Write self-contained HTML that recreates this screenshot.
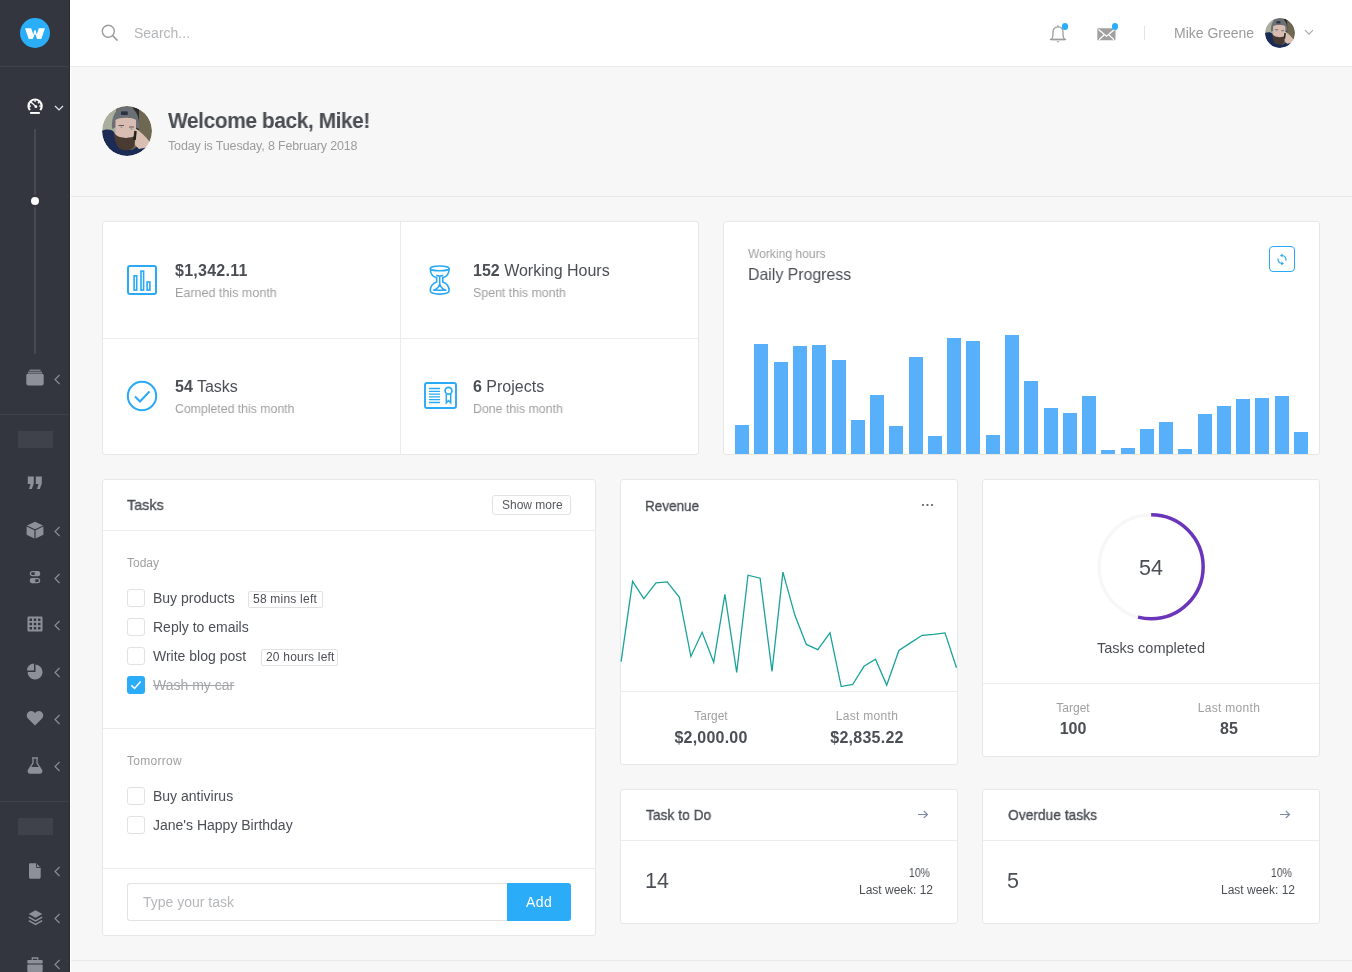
<!DOCTYPE html>
<html><head><meta charset="utf-8">
<style>
*{box-sizing:border-box;margin:0;padding:0}
html,body{width:1352px;height:972px;overflow:hidden;background:#f7f7f7;font-family:"Liberation Sans",sans-serif;color:#4b4e54;-webkit-font-smoothing:antialiased}
.a{position:absolute}
.t{position:absolute;white-space:nowrap;line-height:1;will-change:transform}
#sb{left:0;top:0;width:70px;height:972px;background:#33363f;border-right:1px solid #282b32}
#hd{left:70px;top:0;width:1282px;height:67px;background:#fff;border-bottom:1px solid #ebebeb}
.card{position:absolute;background:#fff;border:1px solid #e6e8e8;border-radius:3px}
.ic{position:absolute}
.chev{position:absolute}
</style></head><body>
<!-- SIDEBAR -->
<div id="sb" class="a">
<div class="a" style="left:0;top:66px;width:69px;height:1px;background:#3e414b"></div>
<div class="a" style="left:0;top:414px;width:69px;height:1px;background:#3e414b"></div>
<div class="a" style="left:0;top:801px;width:69px;height:1px;background:#3e414b"></div>
<!-- logo -->
<div class="a" style="left:20px;top:18px;width:30px;height:30px;border-radius:50%;background:#2aaefa"></div>
<svg class="a" style="left:25px;top:27.5px" width="20" height="11.5" viewBox="0 0 20 11.5"><path d="M0 0.2 H6.2 L8.3 6.4 L9.4 2.2 H10.6 L11.7 6.4 L13.8 0.2 H20 L16.2 11.2 H12.3 L10 5.4 L7.7 11.2 H3.8 Z" fill="#fff"/></svg>
<!-- dashboard icon -->
<svg class="a" style="left:26px;top:97px" width="18" height="18" viewBox="0 0 18 18">
<path d="M3.90 13.16 A6.6 6.6 0 1 1 14.30 13.16" fill="none" stroke="#fff" stroke-width="2.2"/>
<path d="M5.00 9.10 L3.30 9.10 M6.20 6.20 L5.00 5.00 M9.10 5.00 L9.10 3.30 M12.00 6.20 L13.20 5.00 M13.20 9.10 L14.90 9.10 " stroke="#fff" stroke-width="1.3"/>
<path d="M6.2 6 L9.9 9.6" stroke="#fff" stroke-width="1.1"/>
<circle cx="9.9" cy="9.7" r="1.4" fill="#fff"/>
<rect x="4.1" y="15" width="9.7" height="1.9" fill="#fff"/>
</svg>
<svg class="chev" style="left:54px;top:104px" width="10" height="8" viewBox="0 0 10 8"><path d="M1 2 L5 6 L9 2" fill="none" stroke="#e6e7e9" stroke-width="1.2"/></svg>
<!-- timeline -->
<div class="a" style="left:34px;top:129px;width:2px;height:225px;background:#464954"></div>
<div class="a" style="left:29px;top:195px;width:12px;height:12px;border-radius:50%;background:#fff;border:2px solid #33363f"></div>
<!-- stack icon -->
<svg class="a" style="left:26px;top:369px" width="18" height="17" viewBox="0 0 18 17">
<rect x="3.5" y="0.6" width="11" height="1.2" fill="#8d9099"/>
<rect x="2" y="2.6" width="14" height="1.2" fill="#8d9099"/>
<rect x="0.3" y="4.6" width="17.4" height="12" rx="2" fill="#8d9099"/>
</svg>
<svg class="chev" style="left:53px;top:374px" width="8" height="11" viewBox="0 0 8 11"><path d="M6.5 1 L2 5.5 L6.5 10" fill="none" stroke="#8d9099" stroke-width="1.1"/></svg>
<div class="a" style="left:18px;top:431px;width:35px;height:17px;background:#3f424b"></div>
<svg class="a" style="left:27px;top:476px" width="16" height="14" viewBox="0 0 16 14">
<path d="M0.8 0.5 H6.8 V7.5 L4.8 13 H2 L3.6 8 H0.8 Z M8.8 0.5 H14.8 V7.5 L12.8 13 H10 L11.6 8 H8.8 Z" fill="#8d9099"/></svg>
<svg class="a" style="left:26px;top:521px" width="18" height="18" viewBox="0 0 18 18">
<path d="M9 0.7 L17 4.5 L9 8.3 L1 4.5 Z" fill="#8d9099"/>
<path d="M0.6 5.6 L8.4 9.3 V17.5 L0.6 13.8 Z" fill="#8d9099"/>
<path d="M17.4 5.6 L9.6 9.3 V17.5 L17.4 13.8 Z" fill="#8d9099"/>
</svg>
<svg class="chev" style="left:53px;top:526px" width="8" height="11" viewBox="0 0 8 11"><path d="M6.5 1 L2 5.5 L6.5 10" fill="none" stroke="#8d9099" stroke-width="1.1"/></svg>
<svg class="a" style="left:29px;top:570px" width="12" height="15" viewBox="0 0 12 15">
<rect x="1.4" y="1.6" width="9.2" height="4" rx="2" fill="none" stroke="#8d9099" stroke-width="1.3"/>
<circle cx="8.3" cy="3.6" r="2.7" fill="#8d9099"/>
<rect x="1.4" y="8.6" width="9.2" height="4" rx="2" fill="none" stroke="#8d9099" stroke-width="1.3"/>
<circle cx="3.7" cy="10.6" r="2.7" fill="#8d9099"/>
</svg>
<svg class="chev" style="left:53px;top:573px" width="8" height="11" viewBox="0 0 8 11"><path d="M6.5 1 L2 5.5 L6.5 10" fill="none" stroke="#8d9099" stroke-width="1.1"/></svg>
<svg class="a" style="left:27px;top:616px" width="16" height="16" viewBox="0 0 16 16">
<path d="M1.5 0.5 H14.5 A1 1 0 0 1 15.5 1.5 V14.5 A1 1 0 0 1 14.5 15.5 H1.5 A1 1 0 0 1 0.5 14.5 V1.5 A1 1 0 0 1 1.5 0.5 Z M2.5 2.5 V5 H5 V2.5 Z M6.75 2.5 V5 H9.25 V2.5 Z M11 2.5 V5 H13.5 V2.5 Z M2.5 6.75 V9.25 H5 V6.75 Z M6.75 6.75 V9.25 H9.25 V6.75 Z M11 6.75 V9.25 H13.5 V6.75 Z M2.5 11 V13.5 H5 V11 Z M6.75 11 V13.5 H9.25 V11 Z M11 11 V13.5 H13.5 V11 Z" fill="#8d9099" fill-rule="evenodd"/>
</svg>
<svg class="chev" style="left:53px;top:620px" width="8" height="11" viewBox="0 0 8 11"><path d="M6.5 1 L2 5.5 L6.5 10" fill="none" stroke="#8d9099" stroke-width="1.1"/></svg>
<svg class="a" style="left:26px;top:662px" width="18" height="18" viewBox="0 0 18 18">
<path d="M8 1.5 V8.5 H1 A7 7 0 0 1 8 1.5 Z" fill="#8d9099"/>
<path d="M9.5 2.5 A7.5 7.5 0 1 1 1.6 10 H9.5 Z" fill="#8d9099"/>
</svg>
<svg class="chev" style="left:53px;top:667px" width="8" height="11" viewBox="0 0 8 11"><path d="M6.5 1 L2 5.5 L6.5 10" fill="none" stroke="#8d9099" stroke-width="1.1"/></svg>
<svg class="a" style="left:26px;top:710px" width="18" height="16" viewBox="0 0 18 16">
<path d="M9 15.5 L2.2 8.8 C0.2 6.8 0.4 3.5 2.4 1.9 C4.4 0.3 7.3 0.8 9 3 C10.7 0.8 13.6 0.3 15.6 1.9 C17.6 3.5 17.8 6.8 15.8 8.8 Z" fill="#8d9099"/>
</svg>
<svg class="chev" style="left:53px;top:714px" width="8" height="11" viewBox="0 0 8 11"><path d="M6.5 1 L2 5.5 L6.5 10" fill="none" stroke="#8d9099" stroke-width="1.1"/></svg>
<svg class="a" style="left:27px;top:757px" width="16" height="17" viewBox="0 0 16 17">
<rect x="5" y="0.3" width="6" height="1.4" fill="#8d9099"/>
<path d="M6 1.5 V6 L1.5 13 C0.8 14.5 1.6 16 3.2 16 H12.8 C14.4 16 15.2 14.5 14.5 13 L10 6 V1.5" fill="none" stroke="#8d9099" stroke-width="1.3"/>
<path d="M3.6 10 H12.4 L14.5 13 C15.2 14.5 14.4 16 12.8 16 H3.2 C1.6 16 0.8 14.5 1.5 13 Z" fill="#8d9099"/>
</svg>
<svg class="chev" style="left:53px;top:761px" width="8" height="11" viewBox="0 0 8 11"><path d="M6.5 1 L2 5.5 L6.5 10" fill="none" stroke="#8d9099" stroke-width="1.1"/></svg>
<div class="a" style="left:18px;top:818px;width:35px;height:17px;background:#3f424b"></div>
<svg class="a" style="left:29px;top:862.5px" width="12" height="16" viewBox="0 0 12 16">
<path d="M1.4 0.3 H7.3 L11.7 4.7 V14.3 A1.4 1.4 0 0 1 10.3 15.7 H1.4 A1.4 1.4 0 0 1 0 14.3 V1.7 A1.4 1.4 0 0 1 1.4 0.3 Z" fill="#8d9099"/>
<path d="M7.5 0.3 V4.5 H11.7" fill="none" stroke="#33363f" stroke-width="0.9"/>
</svg>
<svg class="chev" style="left:53px;top:866px" width="8" height="11" viewBox="0 0 8 11"><path d="M6.5 1 L2 5.5 L6.5 10" fill="none" stroke="#8d9099" stroke-width="1.1"/></svg>
<svg class="a" style="left:27.5px;top:909.5px" width="15" height="16" viewBox="0 0 15 16">
<path d="M7.5 0.3 L14.3 4 L7.5 7.7 L0.7 4 Z" fill="#8d9099"/>
<path d="M0.8 7.2 L7.5 10.9 L14.2 7.2" fill="none" stroke="#8d9099" stroke-width="1.5"/>
<path d="M0.8 10.6 L7.5 14.3 L14.2 10.6" fill="none" stroke="#8d9099" stroke-width="1.5"/>
</svg>
<svg class="chev" style="left:53px;top:913px" width="8" height="11" viewBox="0 0 8 11"><path d="M6.5 1 L2 5.5 L6.5 10" fill="none" stroke="#8d9099" stroke-width="1.1"/></svg>
<svg class="a" style="left:27px;top:957px" width="16" height="15" viewBox="0 0 16 15">
<path d="M5.3 2.8 V1 H10.7 V2.8" fill="none" stroke="#8d9099" stroke-width="1.4"/>
<rect x="0.3" y="3" width="15.4" height="3.6" rx="1" fill="#8d9099"/>
<rect x="0.3" y="7.4" width="15.4" height="7.6" rx="1" fill="#8d9099"/>
</svg>
<svg class="chev" style="left:53px;top:959px" width="8" height="11" viewBox="0 0 8 11"><path d="M6.5 1 L2 5.5 L6.5 10" fill="none" stroke="#8d9099" stroke-width="1.1"/></svg>
</div>
<!-- HEADER -->
<div id="hd" class="a">
<svg class="a" style="left:31px;top:24px" width="18" height="18" viewBox="0 0 18 18"><circle cx="7.3" cy="7.3" r="6" fill="none" stroke="#9d9d9d" stroke-width="1.4"/><path d="M11.6 11.6 L16.6 16.6" stroke="#9d9d9d" stroke-width="1.5"/></svg>
<div class="t" style="left:64px;top:26px;font-size:14px;color:#b4b5b8">Search...</div>
<svg class="a" style="left:979px;top:24px" width="18" height="20" viewBox="0 0 18 20">
<path d="M2.5 15.5 C3.6 14 4 12.5 4 10.5 V8 C4 5 6 2.8 9 2.8 C12 2.8 14 5 14 8 V10.5 C14 12.5 14.4 14 15.5 15.5 Z" fill="none" stroke="#9d9d9d" stroke-width="1.3" stroke-linejoin="round"/>
<path d="M0.8 15.5 H17.2" stroke="#9d9d9d" stroke-width="1.3"/>
<path d="M9 1.2 V2.8" stroke="#9d9d9d" stroke-width="1.4"/>
<path d="M7.3 17.3 H10.7 L9 18.6 Z" fill="#9d9d9d"/>
</svg>
<div class="a" style="left:991.8px;top:23.2px;width:6.4px;height:6.4px;border-radius:50%;background:#2aaefa"></div>
<svg class="a" style="left:1026.5px;top:27.5px" width="20" height="14" viewBox="0 0 20 14">
<rect x="0.3" y="0.3" width="18.2" height="12" rx="1" fill="#a0a0a0"/>
<path d="M1.5 1.5 L9.5 8.2 L17.5 1.5 M2 11.8 L7 7 M17 11.8 L12 7" fill="none" stroke="#fff" stroke-width="1.2"/>
</svg>
<div class="a" style="left:1041.8px;top:23.2px;width:6.4px;height:6.4px;border-radius:50%;background:#2aaefa"></div>
<div class="a" style="left:1074px;top:26px;width:1px;height:14px;background:#e3e3e3"></div>
<div class="t" style="left:1104px;top:26px;font-size:14px;color:#9b9b9d">Mike Greene</div>
<div id="av2" class="a" style="left:1195px;top:18px;width:30px;height:30px;border-radius:50%;overflow:hidden"><svg width="100%" height="100%" viewBox="0 0 50 50" style="display:block"><defs><clipPath id="cc2"><circle cx="25" cy="25" r="25"/></clipPath><filter id="bl2" x="-10%" y="-10%" width="120%" height="120%"><feGaussianBlur stdDeviation="0.9"/></filter></defs>
<g clip-path="url(#cc2)"><g filter="url(#bl2)">
<rect width="50" height="50" fill="#6e6752"/>
<path d="M0 0 H14 V30 H0 Z" fill="#a9ae9d"/>
<path d="M31 0 H37 V24 H33 Z" fill="#2e2c2a"/>
<path d="M10 23 C9 9 15 0.5 24 0.5 C33 0.5 38 9 37 23 L33 21 L14 21 Z" fill="#6a6f74"/>
<rect x="19" y="5.4" width="6.7" height="3.6" fill="#2a3142"/>
<path d="M13.5 14 C17 11 31 11 34 14 L34 31 C34 38 30 42 24 42 C18 42 13.5 38 13.5 31 Z" fill="#d9bdb2"/>
<path d="M16.5 19.5 H22 M27 21 H32" stroke="#6a5750" stroke-width="1.2"/>
<circle cx="19.5" cy="21.3" r="1" fill="#7fa3ad"/><circle cx="29.5" cy="23" r="1" fill="#7fa3ad"/>
<path d="M0 25 C4 23 9 23 12 26 L18 42 L30 44 L36 40 L44 42 L50 36 V50 H0 Z" fill="#1b2c56"/>
<path d="M11.5 26 C12.5 33 14 39 17 42 C20 45 28 45 31 42 C33 39 33.5 34 33.5 29 C31 32 28 31 24 32 C20 31 15 32 11.5 26 Z" fill="#4a3b30"/>
<path d="M32.5 22 C37 24 44 31 47 35 C48 38 46 41 42 42 L37 43 L33 39 Z" fill="#d8bfb1"/>
<path d="M33.5 25 L32.5 34" stroke="#232222" stroke-width="2.5"/>
</g></g></svg></div>
<svg class="a" style="left:1234px;top:29px" width="10" height="7" viewBox="0 0 10 7"><path d="M1 1.2 L5 5.2 L9 1.2" fill="none" stroke="#a3a6ab" stroke-width="1.1"/></svg>
</div>
<div class="a" style="left:70px;top:67px;width:1px;height:905px;background:#fff"></div>

<!-- WELCOME -->
<div class="a" style="left:102px;top:106px;width:50px;height:50px;border-radius:50%;overflow:hidden"><svg width="100%" height="100%" viewBox="0 0 50 50" style="display:block"><defs><clipPath id="cc"><circle cx="25" cy="25" r="25"/></clipPath><filter id="bl" x="-10%" y="-10%" width="120%" height="120%"><feGaussianBlur stdDeviation="0.7"/></filter></defs>
<g clip-path="url(#cc)"><g filter="url(#bl)">
<rect width="50" height="50" fill="#6e6752"/>
<path d="M0 0 H14 V30 H0 Z" fill="#a9ae9d"/>
<path d="M31 0 H37 V24 H33 Z" fill="#2e2c2a"/>
<path d="M10 23 C9 9 15 0.5 24 0.5 C33 0.5 38 9 37 23 L33 21 L14 21 Z" fill="#6a6f74"/>
<rect x="19" y="5.4" width="6.7" height="3.6" fill="#2a3142"/>
<path d="M13.5 14 C17 11 31 11 34 14 L34 31 C34 38 30 42 24 42 C18 42 13.5 38 13.5 31 Z" fill="#d9bdb2"/>
<path d="M16.5 19.5 H22 M27 21 H32" stroke="#6a5750" stroke-width="1.2"/>
<circle cx="19.5" cy="21.3" r="1" fill="#7fa3ad"/><circle cx="29.5" cy="23" r="1" fill="#7fa3ad"/>
<path d="M0 25 C4 23 9 23 12 26 L18 42 L30 44 L36 40 L44 42 L50 36 V50 H0 Z" fill="#1b2c56"/>
<path d="M11.5 26 C12.5 33 14 39 17 42 C20 45 28 45 31 42 C33 39 33.5 34 33.5 29 C31 32 28 31 24 32 C20 31 15 32 11.5 26 Z" fill="#4a3b30"/>
<path d="M32.5 22 C37 24 44 31 47 35 C48 38 46 41 42 42 L37 43 L33 39 Z" fill="#d8bfb1"/>
<path d="M33.5 25 L32.5 34" stroke="#232222" stroke-width="2.5"/>
</g></g></svg></div>
<div class="t" style="left:168px;top:109.5px;font-size:22px;font-weight:bold;color:#4a4d53;letter-spacing:-0.5px;transform:scaleX(0.955);transform-origin:0 0">Welcome back, Mike!</div>
<div class="t" style="left:168px;top:140px;font-size:12.5px;color:#9c9c9e;letter-spacing:-0.15px">Today is Tuesday, 8 February 2018</div>
<div class="a" style="left:71px;top:196px;width:1281px;height:1px;background:#e9e9e9"></div>

<!-- ROW1 -->
<div class="card" style="left:102px;top:221px;width:597px;height:234px">
<div class="a" style="left:297px;top:0;width:1px;height:232px;background:#ececec"></div>
<div class="a" style="left:0;top:116px;width:595px;height:1px;background:#ececec"></div>
</div>
<svg class="a" style="left:126px;top:264px" width="32" height="32" viewBox="0 0 32 32">
<rect x="2" y="2" width="28" height="28" rx="2" fill="none" stroke="#2aa9f4" stroke-width="2"/>
<rect x="8.1" y="11.8" width="2.6" height="14.3" fill="none" stroke="#2aa9f4" stroke-width="1.6"/>
<rect x="15" y="7.1" width="2.6" height="19" fill="none" stroke="#2aa9f4" stroke-width="1.6"/>
<rect x="21.1" y="18" width="2.8" height="8.1" fill="none" stroke="#2aa9f4" stroke-width="1.6"/>
</svg>
<svg class="a" style="left:428px;top:264px" width="24" height="32" viewBox="0 0 24 32">
<ellipse cx="11.7" cy="4.4" rx="9.4" ry="2.4" fill="none" stroke="#2aa9f4" stroke-width="1.6"/>
<path d="M2.3 4.4 C2.3 9.8 5 12.8 8.6 13.6 V17.9 C4.5 19.5 2.3 22.5 2.3 26.5 C2.3 29.2 6.5 30.1 11.7 30.1 C16.9 30.1 21.1 29.2 21.1 26.5 C21.1 22.5 18.9 19.5 14.8 17.9 V13.6 C18.4 12.8 21.1 9.8 21.1 4.4" fill="none" stroke="#2aa9f4" stroke-width="1.6"/>
<path d="M8.3 11.3 Q11.7 12.9 15.1 11.3 M11.7 12.2 V20.5" fill="none" stroke="#2aa9f4" stroke-width="1.5"/>
<path d="M11.7 20 C11 23.3 8.3 25.3 5.6 26.3 H17.8 C15.1 25.3 12.4 23.3 11.7 20 Z" fill="none" stroke="#2aa9f4" stroke-width="1.5" stroke-linejoin="round"/>
</svg>
<svg class="a" style="left:126px;top:380px" width="32" height="32" viewBox="0 0 32 32">
<circle cx="16" cy="16" r="14.2" fill="none" stroke="#2aa9f4" stroke-width="2"/>
<path d="M9 16.5 L14 21.5 L23.5 11.5" fill="none" stroke="#2aa9f4" stroke-width="2"/>
</svg>
<svg class="a" style="left:423px;top:381px" width="35" height="29" viewBox="0 0 35 29">
<rect x="2" y="2" width="31" height="25" rx="2" fill="none" stroke="#2aa9f4" stroke-width="1.9"/>
<path d="M6 7.5 H17 M6 10.3 H17 M6 13.1 H17 M6 15.9 H17 M6 18.7 H17 M6 21.5 H17" stroke="#2aa9f4" stroke-width="1.3"/>
<circle cx="25.5" cy="9.8" r="3.4" fill="none" stroke="#2aa9f4" stroke-width="1.7"/>
<path d="M23.3 13 V21.8 L25.5 19.6 L27.7 21.8 V13" fill="none" stroke="#2aa9f4" stroke-width="1.5"/>
</svg>
<div class="t" style="left:175px;top:262.9px;font-size:16px;color:#4b4e54;letter-spacing:0.25px;"><b>$1,342.11</b></div>
<div class="t" style="left:175px;top:286.3px;font-size:13px;color:#a0a0a2;transform:scaleX(0.964);transform-origin:0 0;">Earned this month</div>
<div class="t" style="left:473px;top:262.9px;font-size:16px;color:#4b4e54;"><b>152</b> Working Hours</div>
<div class="t" style="left:473px;top:286.3px;font-size:13px;color:#a0a0a2;transform:scaleX(0.952);transform-origin:0 0;">Spent this month</div>
<div class="t" style="left:175px;top:378.9px;font-size:16px;color:#4b4e54;"><b>54</b> Tasks</div>
<div class="t" style="left:175px;top:402.3px;font-size:13px;color:#a0a0a2;transform:scaleX(0.944);transform-origin:0 0;">Completed this month</div>
<div class="t" style="left:473px;top:378.9px;font-size:16px;color:#4b4e54;"><b>6</b> Projects</div>
<div class="t" style="left:473px;top:402.3px;font-size:13px;color:#a0a0a2;transform:scaleX(0.949);transform-origin:0 0;">Done this month</div>
<div class="card" style="left:723px;top:221px;width:597px;height:234px;overflow:hidden">
</div>
<div class="t" style="left:748px;top:247.3px;font-size:13px;color:#a0a0a2;transform:scaleX(0.929);transform-origin:0 0;">Working hours</div>
<div class="t" style="left:748px;top:265.9px;font-size:16.5px;color:#4b4e54;transform:scaleX(0.962);transform-origin:0 0;">Daily Progress</div>
<div class="a" style="left:1269px;top:246px;width:26px;height:26px;border:1px solid #2aa9f4;border-radius:4px"></div>
<svg class="a" style="left:1275px;top:252px" width="14" height="14" viewBox="0 0 14 14">
<path d="M7 3.5 A4 4 0 0 1 10.9 8.6" fill="none" stroke="#2aa9f4" stroke-width="1.2"/>
<path d="M3.1 6.4 A4 4 0 0 0 7 11.5" fill="none" stroke="#2aa9f4" stroke-width="1.2"/>
<path d="M5 3.5 L7.6 1.6 L7.6 5.4 Z M9 11.5 L6.4 9.6 L6.4 13.4 Z" fill="#2aa9f4"/>
</svg>
<div class="a" style="left:735.20px;top:425.0px;width:14px;height:29.0px;background:#58b0fa"></div>
<div class="a" style="left:754.47px;top:344.1px;width:14px;height:109.9px;background:#58b0fa"></div>
<div class="a" style="left:773.74px;top:362.0px;width:14px;height:92.0px;background:#58b0fa"></div>
<div class="a" style="left:793.01px;top:346.1px;width:14px;height:107.9px;background:#58b0fa"></div>
<div class="a" style="left:812.28px;top:345.1px;width:14px;height:108.9px;background:#58b0fa"></div>
<div class="a" style="left:831.55px;top:360.0px;width:14px;height:94.0px;background:#58b0fa"></div>
<div class="a" style="left:850.82px;top:420.0px;width:14px;height:34.0px;background:#58b0fa"></div>
<div class="a" style="left:870.09px;top:395.0px;width:14px;height:59.0px;background:#58b0fa"></div>
<div class="a" style="left:889.36px;top:426.0px;width:14px;height:28.0px;background:#58b0fa"></div>
<div class="a" style="left:908.63px;top:357.0px;width:14px;height:97.0px;background:#58b0fa"></div>
<div class="a" style="left:927.90px;top:436.1px;width:14px;height:17.9px;background:#58b0fa"></div>
<div class="a" style="left:947.17px;top:338.0px;width:14px;height:116.0px;background:#58b0fa"></div>
<div class="a" style="left:966.44px;top:341.0px;width:14px;height:113.0px;background:#58b0fa"></div>
<div class="a" style="left:985.71px;top:435.1px;width:14px;height:18.9px;background:#58b0fa"></div>
<div class="a" style="left:1004.98px;top:335.0px;width:14px;height:119.0px;background:#58b0fa"></div>
<div class="a" style="left:1024.25px;top:381.2px;width:14px;height:72.8px;background:#58b0fa"></div>
<div class="a" style="left:1043.52px;top:407.9px;width:14px;height:46.1px;background:#58b0fa"></div>
<div class="a" style="left:1062.79px;top:412.9px;width:14px;height:41.1px;background:#58b0fa"></div>
<div class="a" style="left:1082.06px;top:395.8px;width:14px;height:58.2px;background:#58b0fa"></div>
<div class="a" style="left:1101.33px;top:450.0px;width:14px;height:4.0px;background:#58b0fa"></div>
<div class="a" style="left:1120.60px;top:448.0px;width:14px;height:6.0px;background:#58b0fa"></div>
<div class="a" style="left:1139.87px;top:428.8px;width:14px;height:25.2px;background:#58b0fa"></div>
<div class="a" style="left:1159.14px;top:421.8px;width:14px;height:32.2px;background:#58b0fa"></div>
<div class="a" style="left:1178.41px;top:449.0px;width:14px;height:5.0px;background:#58b0fa"></div>
<div class="a" style="left:1197.68px;top:414.0px;width:14px;height:40.0px;background:#58b0fa"></div>
<div class="a" style="left:1216.95px;top:405.9px;width:14px;height:48.1px;background:#58b0fa"></div>
<div class="a" style="left:1236.22px;top:398.8px;width:14px;height:55.2px;background:#58b0fa"></div>
<div class="a" style="left:1255.49px;top:397.8px;width:14px;height:56.2px;background:#58b0fa"></div>
<div class="a" style="left:1274.76px;top:395.8px;width:14px;height:58.2px;background:#58b0fa"></div>
<div class="a" style="left:1294.03px;top:431.8px;width:14px;height:22.2px;background:#58b0fa"></div>
<!-- ROW2 -->
<div class="card" style="left:102px;top:479px;width:494px;height:457px"></div>
<div class="a" style="left:103px;top:530px;width:492px;height:1px;background:#ececec"></div>
<div class="a" style="left:103px;top:728px;width:492px;height:1px;background:#ececec"></div>
<div class="a" style="left:103px;top:868px;width:492px;height:1px;background:#ececec"></div>
<div class="t" style="left:127.3px;top:497.2px;font-size:15px;color:#4b4e54;-webkit-text-stroke:0.35px currentColor;transform:scaleX(0.96);transform-origin:0 0;">Tasks</div>
<div class="a" style="left:492px;top:495px;width:79px;height:20px;border:1px solid #e2e2e2;border-radius:3px"></div>
<div class="t" style="left:501.5px;top:498.9px;font-size:12px;color:#55585d;">Show more</div>
<div class="t" style="left:127px;top:556.6px;font-size:12px;color:#a0a0a2;">Today</div>
<div class="a" style="left:127px;top:589px;width:18px;height:18px;border-radius:3px;border:1px solid #e2e2e2"></div>
<div class="t" style="left:152.5px;top:591.2px;font-size:14px;color:#4b4e54;">Buy products</div>
<div class="a" style="left:247.5px;top:590.5px;width:75px;height:17px;border:1px solid #e2e2e2;border-radius:2px"></div>
<div class="t" style="left:252.5px;top:592.9px;font-size:12px;color:#4b4e54;letter-spacing:0.22px;">58 mins left</div>
<div class="a" style="left:127px;top:618px;width:18px;height:18px;border-radius:3px;border:1px solid #e2e2e2"></div>
<div class="t" style="left:152.5px;top:620.2px;font-size:14px;color:#4b4e54;">Reply to emails</div>
<div class="a" style="left:127px;top:647px;width:18px;height:18px;border-radius:3px;border:1px solid #e2e2e2"></div>
<div class="t" style="left:152.5px;top:649.2px;font-size:14px;color:#4b4e54;">Write blog post</div>
<div class="a" style="left:260.5px;top:648.5px;width:77px;height:17px;border:1px solid #e2e2e2;border-radius:2px"></div>
<div class="t" style="left:265.5px;top:650.9px;font-size:12px;color:#4b4e54;letter-spacing:0.2px;">20 hours left</div>
<div class="a" style="left:127px;top:676px;width:18px;height:18px;border-radius:3px;background:#2aacf8"></div>
<svg class="a" style="left:127px;top:676px" width="18" height="18" viewBox="0 0 18 18"><path d="M4.3 9.4 L7.6 12.4 L13.6 5.6" fill="none" stroke="#fff" stroke-width="1.5"/></svg>
<div class="t" style="left:152.5px;top:678.2px;font-size:14px;color:#a3a5a8;text-decoration:line-through;">Wash my car</div>
<div class="t" style="left:127px;top:755.3px;font-size:12px;color:#a0a0a2;letter-spacing:0.27px;">Tomorrow</div>
<div class="a" style="left:127px;top:787px;width:18px;height:18px;border-radius:3px;border:1px solid #e2e2e2"></div>
<div class="t" style="left:152.5px;top:789.2px;font-size:14px;color:#4b4e54;">Buy antivirus</div>
<div class="a" style="left:127px;top:816px;width:18px;height:18px;border-radius:3px;border:1px solid #e2e2e2"></div>
<div class="t" style="left:152.5px;top:818.2px;font-size:14px;color:#4b4e54;">Jane's Happy Birthday</div>
<div class="a" style="left:127px;top:883px;width:381px;height:38px;border:1px solid #e2e2e2;border-right:none;border-radius:3px 0 0 3px"></div>
<div class="t" style="left:142.5px;top:895.2px;font-size:14px;color:#b5b7ba;">Type your task</div>
<div class="a" style="left:507px;top:883px;width:64px;height:38px;background:#2aacf8;border-radius:0 3px 3px 0"></div>
<div class="t" style="left:526px;top:895.2px;font-size:14px;color:#ffffff;letter-spacing:0.5px;">Add</div>
<!-- REV -->
<div class="card" style="left:620px;top:479px;width:338px;height:286px"></div>
<div class="t" style="left:645px;top:497.6px;font-size:15px;color:#4b4e54;-webkit-text-stroke:0.35px currentColor;transform:scaleX(0.9);transform-origin:0 0;">Revenue</div>
<svg class="a" style="left:921px;top:503px" width="14" height="4" viewBox="0 0 14 4"><circle cx="2" cy="2" r="1.1" fill="#55585d"/><circle cx="6.5" cy="2" r="1.1" fill="#55585d"/><circle cx="11" cy="2" r="1.1" fill="#55585d"/></svg>
<svg class="a" style="left:620px;top:479px" width="338" height="220" viewBox="0 0 338 220"><path d="M1.1 182.7 L12.6 102.3 L23.8 119.6 L36.0 103.8 L47.2 102.9 L59.4 118.3 L70.9 177.5 L82.1 153.3 L93.7 183.3 L104.9 115.3 L116.7 193.3 L128.0 96.2 L140.1 99.2 L152.0 192.4 L162.9 93.1 L175.0 136.6 L186.3 165.4 L197.8 170.6 L210.0 153.9 L221.2 207.6 L232.7 205.5 L244.0 187.3 L255.5 180.3 L266.7 206.1 L278.9 171.5 L290.4 163.9 L302.2 156.3 L313.8 155.4 L325.0 153.9 L336.5 188.8" fill="none" stroke="#1aa39a" stroke-width="1.3" stroke-linejoin="miter"/></svg>
<div class="a" style="left:621px;top:691px;width:336px;height:1px;background:#ececec"></div>
<div class="t" style="left:610.5px;width:200px;text-align:center;top:710.0px;font-size:12px;color:#a0a0a2;">Target</div>
<div class="t" style="left:610.6px;width:200px;text-align:center;top:729.5px;font-size:16px;color:#4b4e54;letter-spacing:0.2px;"><b>$2,000.00</b></div>
<div class="t" style="left:766.6px;width:200px;text-align:center;top:710.0px;font-size:12px;color:#a0a0a2;letter-spacing:0.3px;">Last month</div>
<div class="t" style="left:766.9px;width:200px;text-align:center;top:729.5px;font-size:16px;color:#4b4e54;letter-spacing:0.25px;"><b>$2,835.22</b></div>
<div class="card" style="left:982px;top:479px;width:338px;height:278px"></div>
<svg class="a" style="left:1091px;top:507px" width="120" height="120" viewBox="0 0 120 120">
<circle cx="60.15" cy="59.75" r="52" fill="none" stroke="#f7f7f7" stroke-width="3.5"/>
<circle cx="60.15" cy="59.75" r="52" fill="none" stroke="#6a35bb" stroke-width="3.5" stroke-dasharray="176.4 400" transform="rotate(-90 60.15 59.75)"/>
</svg>
<div class="t" style="left:1051.2px;width:200px;text-align:center;top:557.6px;font-size:21.5px;color:#4b4e54;">54</div>
<div class="t" style="left:1051px;width:200px;text-align:center;top:640.7px;font-size:14.5px;color:#4b4e54;">Tasks completed</div>
<div class="a" style="left:983px;top:683px;width:336px;height:1px;background:#ececec"></div>
<div class="t" style="left:972.8px;width:200px;text-align:center;top:701.7px;font-size:12px;color:#a0a0a2;">Target</div>
<div class="t" style="left:973.2px;width:200px;text-align:center;top:721.3px;font-size:16px;color:#4b4e54;"><b>100</b></div>
<div class="t" style="left:1129.1px;width:200px;text-align:center;top:701.7px;font-size:12px;color:#a0a0a2;letter-spacing:0.3px;">Last month</div>
<div class="t" style="left:1129px;width:200px;text-align:center;top:721.3px;font-size:16px;color:#4b4e54;"><b>85</b></div>
<div class="card" style="left:620px;top:789px;width:338px;height:135px"></div>
<div class="a" style="left:621px;top:840px;width:336px;height:1px;background:#ececec"></div>
<div class="t" style="left:646px;top:806.9px;font-size:15px;color:#4b4e54;-webkit-text-stroke:0.35px currentColor;transform:scaleX(0.92);transform-origin:0 0;">Task to Do</div>
<svg class="a" style="left:917px;top:810px" width="12" height="9" viewBox="0 0 12 9"><path d="M1 4.5 H10.5 M6.8 1 L10.5 4.5 L6.8 8" fill="none" stroke="#7d8aa5" stroke-width="1.1"/></svg>
<div class="t" style="left:645px;top:871.3px;font-size:21.5px;color:#4b4e54;">14</div>
<div class="t" style="left:729.5px;width:200px;text-align:right;top:867.1px;font-size:12px;color:#4b4e54;transform:scaleX(0.88);transform-origin:100% 0;">10%</div>
<div class="t" style="left:733px;width:200px;text-align:right;top:883.7px;font-size:12px;color:#4b4e54;">Last week: 12</div>
<div class="card" style="left:982px;top:789px;width:338px;height:135px"></div>
<div class="a" style="left:983px;top:840px;width:336px;height:1px;background:#ececec"></div>
<div class="t" style="left:1008px;top:806.9px;font-size:15px;color:#4b4e54;-webkit-text-stroke:0.35px currentColor;transform:scaleX(0.92);transform-origin:0 0;">Overdue tasks</div>
<svg class="a" style="left:1279px;top:810px" width="12" height="9" viewBox="0 0 12 9"><path d="M1 4.5 H10.5 M6.8 1 L10.5 4.5 L6.8 8" fill="none" stroke="#7d8aa5" stroke-width="1.1"/></svg>
<div class="t" style="left:1007px;top:871.3px;font-size:21.5px;color:#4b4e54;">5</div>
<div class="t" style="left:1091.5px;width:200px;text-align:right;top:867.1px;font-size:12px;color:#4b4e54;transform:scaleX(0.88);transform-origin:100% 0;">10%</div>
<div class="t" style="left:1095px;width:200px;text-align:right;top:883.7px;font-size:12px;color:#4b4e54;">Last week: 12</div>
<div class="a" style="left:71px;top:960px;width:1281px;height:1px;background:#e9e9e9"></div>
</body></html>
